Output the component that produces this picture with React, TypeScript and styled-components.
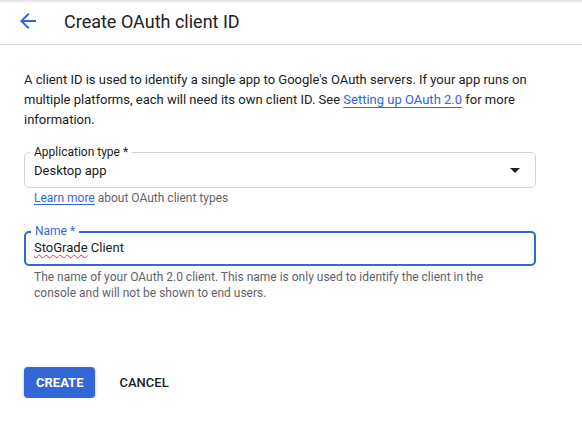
import styled, {createGlobalStyle} from "styled-components";


const GlobalStyle = createGlobalStyle`
    html, body {
        margin: 0;
        padding: 0;
        background: #fff;
    }

    body {
        font-family: Roboto, "Liberation Sans", Arial, sans-serif;
        color: #202124;
        -webkit-font-smoothing: antialiased;
    }

    * {
        box-sizing: border-box;
    }
`

const SHeader = styled.header`
    height: 45px;
    display: flex;
    align-items: center;
    padding: 0 0 2px 16px;
    border-bottom: 1px solid #dadce0;
    background: linear-gradient(#dcdcdc 0, #f3f3f3 2px, #fff 4px);
`

const SBackButton = styled.div`
    width: 24px;
    height: 24px;
    display: flex;
    align-items: center;
    justify-content: center;
    margin-right: 24px;
    cursor: pointer;

    svg {
        width: 24px;
        height: 24px;
        fill: #3367d6;
    }
`

const STitle = styled.h1`
    margin: 0;
    font-size: 18px;
    font-weight: 400;
    color: #202124;
`

const SContent = styled.main`
    width: 560px;
    padding: 25px 24px 0;
`

const SIntro = styled.p`
    margin: 0;
    font-size: 13px;
    line-height: 20px;
    width: 512px;
`

const SLink = styled.a`
    color: #3367d6;
    text-decoration: underline;
    text-underline-offset: 3px;
    cursor: pointer;
`

const SField = styled.div<{ $focused?: boolean, $marginTop: string }>`
    position: relative;
    width: 512px;
    height: ${({$focused}) => $focused ? '35px' : '36px'};
    margin-top: ${({$marginTop}) => $marginTop};
    display: flex;
    align-items: center;
    padding: ${({$focused}) => $focused ? '0 8px 2px' : '0 9px 0'};
    border: ${({$focused}) => $focused ? '2px solid #3367d6' : '1px solid #d3d3d3'};
    border-radius: 5px;
    font-size: 13px;
`

const SFloatingLabel = styled.label<{ $focused?: boolean }>`
    position: absolute;
    top: ${({$focused}) => $focused ? '-10px' : '-9px'};
    left: 5px;
    padding: 0 4px;
    background: #fff;
    font-size: 12px;
    line-height: 16px;
    color: ${({$focused}) => $focused ? '#3367d6' : '#202124'};
`

const SValue = styled.span`
    flex: 1;
`

const SMisspelled = styled.span`
    text-decoration: underline wavy #e53935;
    text-decoration-thickness: 1px;
    text-underline-offset: 2px;
`

const SCaret = styled.span`
    width: 0;
    height: 0;
    margin-right: 6px;
    border-left: 5px solid transparent;
    border-right: 5px solid transparent;
    border-top: 5px solid #202124;
`

const SHint = styled.div<{ $marginTop: string }>`
    margin-top: ${({$marginTop}) => $marginTop};
    padding: 0 20px 0 10px;
    width: 512px;
    font-size: 12px;
    line-height: 16px;
    color: #5f6368;

    a {
        text-underline-offset: 2px;
    }
`

const SActions = styled.div`
    display: flex;
    gap: 8px;
    margin-top: 66px;
`

const SButton = styled.button<{ $primary?: boolean }>`
    height: 31px;
    padding: 0 ${({$primary}) => $primary ? '12px' : '16px'};
    border: none;
    border-radius: 4px;
    font-family: Roboto, "Liberation Sans", Arial, sans-serif;
    font-size: 13px;
    font-weight: ${({$primary}) => $primary ? 700 : 500};
    color: ${({$primary}) => $primary ? '#fff' : '#202124'};
    background: ${({$primary}) => $primary ? '#3367d6' : 'transparent'};
    box-shadow: ${({$primary}) => $primary ? '0 1px 3px rgba(60, 64, 67, 0.35)' : 'none'};
    cursor: pointer;
`

export default function App() {
    return (<>
        <GlobalStyle/>
        <SHeader>
            <SBackButton>
                <svg viewBox="0 0 24 24">
                    <path d="M20 11H7.83l5.59-5.59L12 4l-8 8 8 8 1.41-1.41L7.83 13H20v-2z"/>
                </svg>
            </SBackButton>
            <STitle>Create OAuth client ID</STitle>
        </SHeader>

        <SContent>
            <SIntro>
                A client ID is used to identify a single app to Google's OAuth servers. If your app runs on
                multiple platforms, each will need its own client ID. See <SLink>Setting up OAuth 2.0</SLink> for
                more information.
            </SIntro>

            <SField $marginTop="22px">
                <SFloatingLabel>Application type *</SFloatingLabel>
                <SValue>Desktop app</SValue>
                <SCaret/>
            </SField>
            <SHint $marginTop="2px">
                <SLink>Learn more</SLink> about OAuth client types
            </SHint>

            <SField $focused $marginTop="25px">
                <SFloatingLabel $focused>Name *</SFloatingLabel>
                <SValue><SMisspelled>StoGrade</SMisspelled> Client</SValue>
            </SField>
            <SHint $marginTop="3px">
                The name of your OAuth 2.0 client. This name is only used to identify the client in the
                console and will not be shown to end users.
            </SHint>

            <SActions>
                <SButton $primary>CREATE</SButton>
                <SButton>CANCEL</SButton>
            </SActions>
        </SContent>
    </>)
}
